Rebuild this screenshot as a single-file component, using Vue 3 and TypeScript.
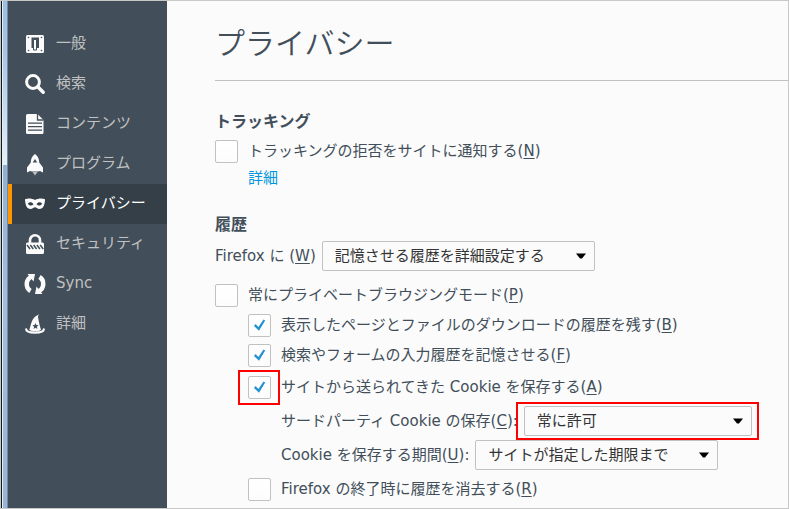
<script setup lang="ts">
import { ref } from 'vue'

interface Category {
  id: string
  label: string
}

interface CheckItem {
  id: string
  label: string
  accessKey: string
  checked: boolean
  nested: boolean
  marked?: boolean
}

const categories: Category[] = [
  { id: 'general', label: '一般' },
  { id: 'search', label: '検索' },
  { id: 'content', label: 'コンテンツ' },
  { id: 'programs', label: 'プログラム' },
  { id: 'privacy', label: 'プライバシー' },
  { id: 'security', label: 'セキュリティ' },
  { id: 'sync', label: 'Sync' },
  { id: 'advanced', label: '詳細' },
]

const active = ref('privacy')
const doNotTrack = ref(false)
const clearOnExit = ref(false)

const historyChecks = ref<CheckItem[]>([
  { id: 'private', label: '常にプライベートブラウジングモード', accessKey: 'P', checked: false, nested: false },
  { id: 'browsing', label: '表示したページとファイルのダウンロードの履歴を残す', accessKey: 'B', checked: true, nested: true },
  { id: 'forms', label: '検索やフォームの入力履歴を記憶させる', accessKey: 'F', checked: true, nested: true },
  { id: 'cookies', label: 'サイトから送られてきた Cookie を保存する', accessKey: 'A', checked: true, nested: true, marked: true },
])
</script>

<template>
  <div class="window">
    <div class="edge"></div>
    <nav class="sidebar">
      <a
        v-for="c in categories"
        :key="c.id"
        href="#"
        class="category"
        :class="{ active: c.id === active }"
        @click.prevent="active = c.id"
      >
        <svg class="icon" viewBox="0 0 20 20" aria-hidden="true">
          <g v-if="c.id === 'general'">
            <rect x="1" y="1" width="18" height="18" rx="1.5" />
            <path class="cut" d="M6.500 3.500h7.500V14H6.500z" />
            <path class="toggle" d="M8.500 5.500h3v10.500h-3z" />
            <g class="cut">
              <circle cx="3.5" cy="3.5" r=".8" /><circle cx="16.5" cy="3.5" r=".8" />
              <circle cx="3.5" cy="16.5" r=".8" /><circle cx="16.5" cy="16.5" r=".8" />
            </g>
          </g>
          <g v-else-if="c.id === 'search'">
            <circle class="stroke" cx="8" cy="8" r="6.4" />
            <path class="handle" d="M13 13l5.2 5.2" />
          </g>
          <g v-else-if="c.id === 'content'">
            <path d="M2.500 0h10l6 6v12.500q0 1.500-1.500 1.500H2.500Q1 20 1 18.500v-17Q1 0 2.500 0z" />
            <path class="cut-line" d="M12.500 0v6h6M3 9.200h14M3 12.700h14M3 16.200h14" />
          </g>
          <g v-else-if="c.id === 'programs'">
            <path d="M10 0c3 2.200 4.200 5 4.200 8.500l3.800 5V18.500l-3-1.500-2 .5H7l-2-.5-3 1.500v-5l3.800-5C5.800 5 7 2.200 10 0z" />
            <path class="cut" d="M7.700 8.500L10 5l2.300 3.500z" />
            <path class="flame" d="M7.500 18h5L10 21.500z" />
          </g>
          <g v-else-if="c.id === 'privacy'">
            <path d="M0 5.200c3-1.300 7-.8 10 .7 3-1.500 7-2 10-.7-.1 5.500-1.800 9.800-5.500 9.800-2.300 0-3.200-1.700-4.500-1.700S7.800 15 5.500 15C1.800 15 .1 10.700 0 5.200z" />
            <path class="cut" d="M2.800 9.700c1.700-2 4-1.900 5.700.6-1.800 1.700-4.200 1.600-5.700-.6zM17.200 9.700c-1.700-2-4-1.900-5.700.6 1.800 1.700 4.200 1.600 5.700-.6z" />
          </g>
          <g v-else-if="c.id === 'security'">
            <path class="shackle" d="M5 9V6.300a5 5 0 0 1 10 0V9" />
            <rect x="1" y="8.500" width="18" height="11.500" rx="1.500" />
            <path class="hatch" d="M2 11l3 4M5.300 11l3 4M8.600 11l3 4M11.900 11l3 4M15.200 11l3 4" />
          </g>
          <g v-else-if="c.id === 'sync'">
            <path class="arc" d="M6.500 2.800C.5 5.500.2 13.800 5.500 17M13.500 17.200c6-2.700 6.300-11 1-14.200" />
            <path d="M2.500 0H10L8.500 7.500zM17.500 20H10l1.500-7.500z" />
          </g>
          <g v-else>
            <path d="M4.300 16C5.500 13 6 7.500 8.700 4.200 10 2.600 12 1.600 14 .3c-.7 1.400-1.200 2-.9 3.500.8 3.700 1.600 8.700 3 12.200-3 1.700-8.800 1.700-11.800 0z" />
            <path class="brim" d="M1.200 15.300c0 4.400 17.600 4.400 17.600 0" />
            <path class="cut" d="M10.500 9l.9 2 2.200.2-1.700 1.500.5 2.200-1.900-1.200-1.900 1.200.5-2.200-1.700-1.500 2.200-.2z" />
          </g>
        </svg>
        <span>{{ c.label }}</span>
      </a>
    </nav>

    <main class="pane">
      <header class="title">
        <h1>プライバシー</h1>
      </header>

      <section class="group">
        <h2>トラッキング</h2>
        <label class="row">
          <span class="check">
            <input v-model="doNotTrack" type="checkbox" />
            <svg viewBox="0 0 23 23" aria-hidden="true"><path d="M7.500 10l2.900 3L15.500 5.500l1.700 1L11 16.700 6 12z" /></svg>
          </span>
          <span>トラッキングの拒否をサイトに通知する(<u>N</u>)</span>
        </label>
        <div class="more"><a href="#" @click.prevent>詳細</a></div>
      </section>

      <section class="group">
        <h2>履歴</h2>
        <div class="row tall mode">
          <label for="history-mode">Firefox に (<u>W</u>)</label>
          <span class="dropdown wide">
            <select id="history-mode"><option>記憶させる履歴を詳細設定する</option></select>
            <svg viewBox="0 0 10 6" aria-hidden="true"><path d="M0 .5h10L6 5.500H4z" /></svg>
          </span>
        </div>

        <label
          v-for="item in historyChecks"
          :key="item.id"
          class="row"
          :class="{ nested: item.nested, tall: item.marked }"
        >
          <span class="check" :class="{ marked: item.marked }">
            <input v-model="item.checked" type="checkbox" />
            <svg viewBox="0 0 23 23" aria-hidden="true"><path d="M7.500 10l2.900 3L15.500 5.500l1.700 1L11 16.700 6 12z" /></svg>
          </span>
          <span>{{ item.label }}(<u>{{ item.accessKey }}</u>)</span>
        </label>

        <div class="row tall deep">
          <label for="third-party">サードパーティ Cookie の保存(<u>C</u>):</label>
          <span class="dropdown narrow marked">
            <select id="third-party"><option>常に許可</option></select>
            <svg viewBox="0 0 10 6" aria-hidden="true"><path d="M0 .5h10L6 5.500H4z" /></svg>
          </span>
        </div>
        <div class="row tall deep">
          <label for="keep-until">Cookie を保存する期間(<u>U</u>):</label>
          <span class="dropdown medium">
            <select id="keep-until"><option>サイトが指定した期限まで</option></select>
            <svg viewBox="0 0 10 6" aria-hidden="true"><path d="M0 .5h10L6 5.500H4z" /></svg>
          </span>
        </div>

        <label class="row tall nested">
          <span class="check">
            <input v-model="clearOnExit" type="checkbox" />
            <svg viewBox="0 0 23 23" aria-hidden="true"><path d="M7.500 10l2.900 3L15.500 5.500l1.700 1L11 16.700 6 12z" /></svg>
          </span>
          <span>Firefox の終了時に履歴を消去する(<u>R</u>)</span>
        </label>
      </section>
    </main>
  </div>
</template>

<style>
body {
  margin: 0;
}
</style>

<style scoped>
.window {
  box-sizing: border-box;
  min-height: 100vh;
  display: flex;
  border: 1px solid #c8c8c8;
  background: #fbfbfb;
  color: #424f5a;
  font: 400 15px/22px 'DejaVu Sans', 'Noto Sans CJK JP', sans-serif;
}

.edge {
  box-sizing: border-box;
  flex: none;
  width: 7px;
  border-left: 1px solid #10181f;
  border-right: 1px solid #6d8aa8;
  box-shadow: inset 1px 0 #e6eef5;
  background: linear-gradient(#9dbfe0, #a9c4e2 50px, #e8eff6 164px, #94b0cf 164px, #a3bedc 300px, #9ab5d2);
}

.sidebar {
  flex: none;
  width: 159px;
  padding-top: 23px;
  background: #424f5a;
}

.category {
  box-sizing: border-box;
  height: 40px;
  display: flex;
  align-items: center;
  gap: 11px;
  padding-left: 13px;
  border-left: 4px solid transparent;
  color: #c1c1c1;
  text-decoration: none;
}

.category span {
  padding-bottom: 2px;
}

.category.active {
  border-left-color: #ff9500;
  background: #343f48;
  color: #fff;
}

.icon {
  --cut: #424f5a;
  width: 20px;
  height: 20px;
  overflow: visible;
  fill: #fbfbfb;
}

.active .icon {
  --cut: #343f48;
}

.cut {
  fill: var(--cut);
}

.toggle {
  fill: #fbfbfb;
  stroke: var(--cut);
  stroke-width: 1;
}

.cut-line {
  fill: none;
  stroke: var(--cut);
  stroke-width: 1.3;
}

.stroke {
  fill: none;
  stroke: #fbfbfb;
  stroke-width: 3;
}

.arc {
  fill: none;
  stroke: #fbfbfb;
  stroke-width: 4.5;
}

.handle {
  stroke: #fbfbfb;
  stroke-width: 3.5;
  stroke-linecap: round;
}

.flame {
  fill: #b9bec2;
}

.shackle {
  fill: none;
  stroke: #fbfbfb;
  stroke-width: 2.6;
}

.hatch {
  fill: none;
  stroke: var(--cut);
  stroke-width: 1.5;
}

.brim {
  fill: none;
  stroke: #fbfbfb;
  stroke-width: 2.2;
  stroke-linecap: round;
}

.pane {
  flex: 1;
  min-width: 0;
  padding-left: 48px;
}

.title {
  padding: 23px 0 16px;
  border-bottom: 1px solid #c1c1c1;
}

h1 {
  margin: 0;
  font-size: 30px;
  line-height: 40px;
  font-weight: 350;
}

h2 {
  margin: 0;
  font-size: 16px;
  line-height: 28px;
  font-weight: 700;
}

.group {
  padding-top: 27px;
}

.group + .group {
  padding-top: 21px;
}

.row {
  display: flex;
  align-items: center;
  gap: 10px;
  height: 30px;
  white-space: nowrap;
}

.row.tall {
  height: 34px;
}

.mode {
  gap: 6px;
  margin-bottom: 7px;
}

.nested {
  padding-left: 33px;
}

.deep {
  gap: 6px;
  padding-left: 66px;
}

.more {
  padding-left: 33px;
  line-height: 24px;
}

.more a {
  color: #0095dd;
  text-decoration: none;
}

u {
  text-underline-offset: 2px;
  text-decoration-thickness: 1px;
}

.check,
.dropdown {
  position: relative;
  display: grid;
  align-items: center;
}

.check > input,
.check > svg,
.dropdown > select,
.dropdown > svg {
  grid-area: 1 / 1;
}

.check input {
  appearance: none;
  box-sizing: border-box;
  width: 23px;
  height: 23px;
  margin: 0;
  border: 1px solid #c1c1c1;
  border-radius: 2px;
  background: linear-gradient(#fff, #fcfcfc);
}

.check svg {
  display: none;
  width: 23px;
  height: 23px;
  pointer-events: none;
  fill: #2292d0;
}

.check input:checked + svg {
  display: block;
}

.dropdown select {
  appearance: none;
  box-sizing: border-box;
  width: 100%;
  height: 30px;
  margin: 0;
  padding: 0 32px 0 12px;
  border: 1px solid #c1c1c1;
  border-radius: 2px;
  background: #fbfbfb;
  color: #333;
  font: inherit;
}

.dropdown svg {
  justify-self: end;
  width: 10px;
  height: 6px;
  margin-right: 9px;
  pointer-events: none;
}

.wide {
  width: 273px;
}

.medium {
  width: 243px;
}

.narrow {
  width: 228px;
}

.marked::after {
  content: '';
  position: absolute;
  border: 2px solid #f00;
  pointer-events: none;
}

.check.marked::after {
  inset: -6px -9px -6px -10px;
}

.dropdown.marked::after {
  inset: -4px -7px -4px -8px;
}
</style>
